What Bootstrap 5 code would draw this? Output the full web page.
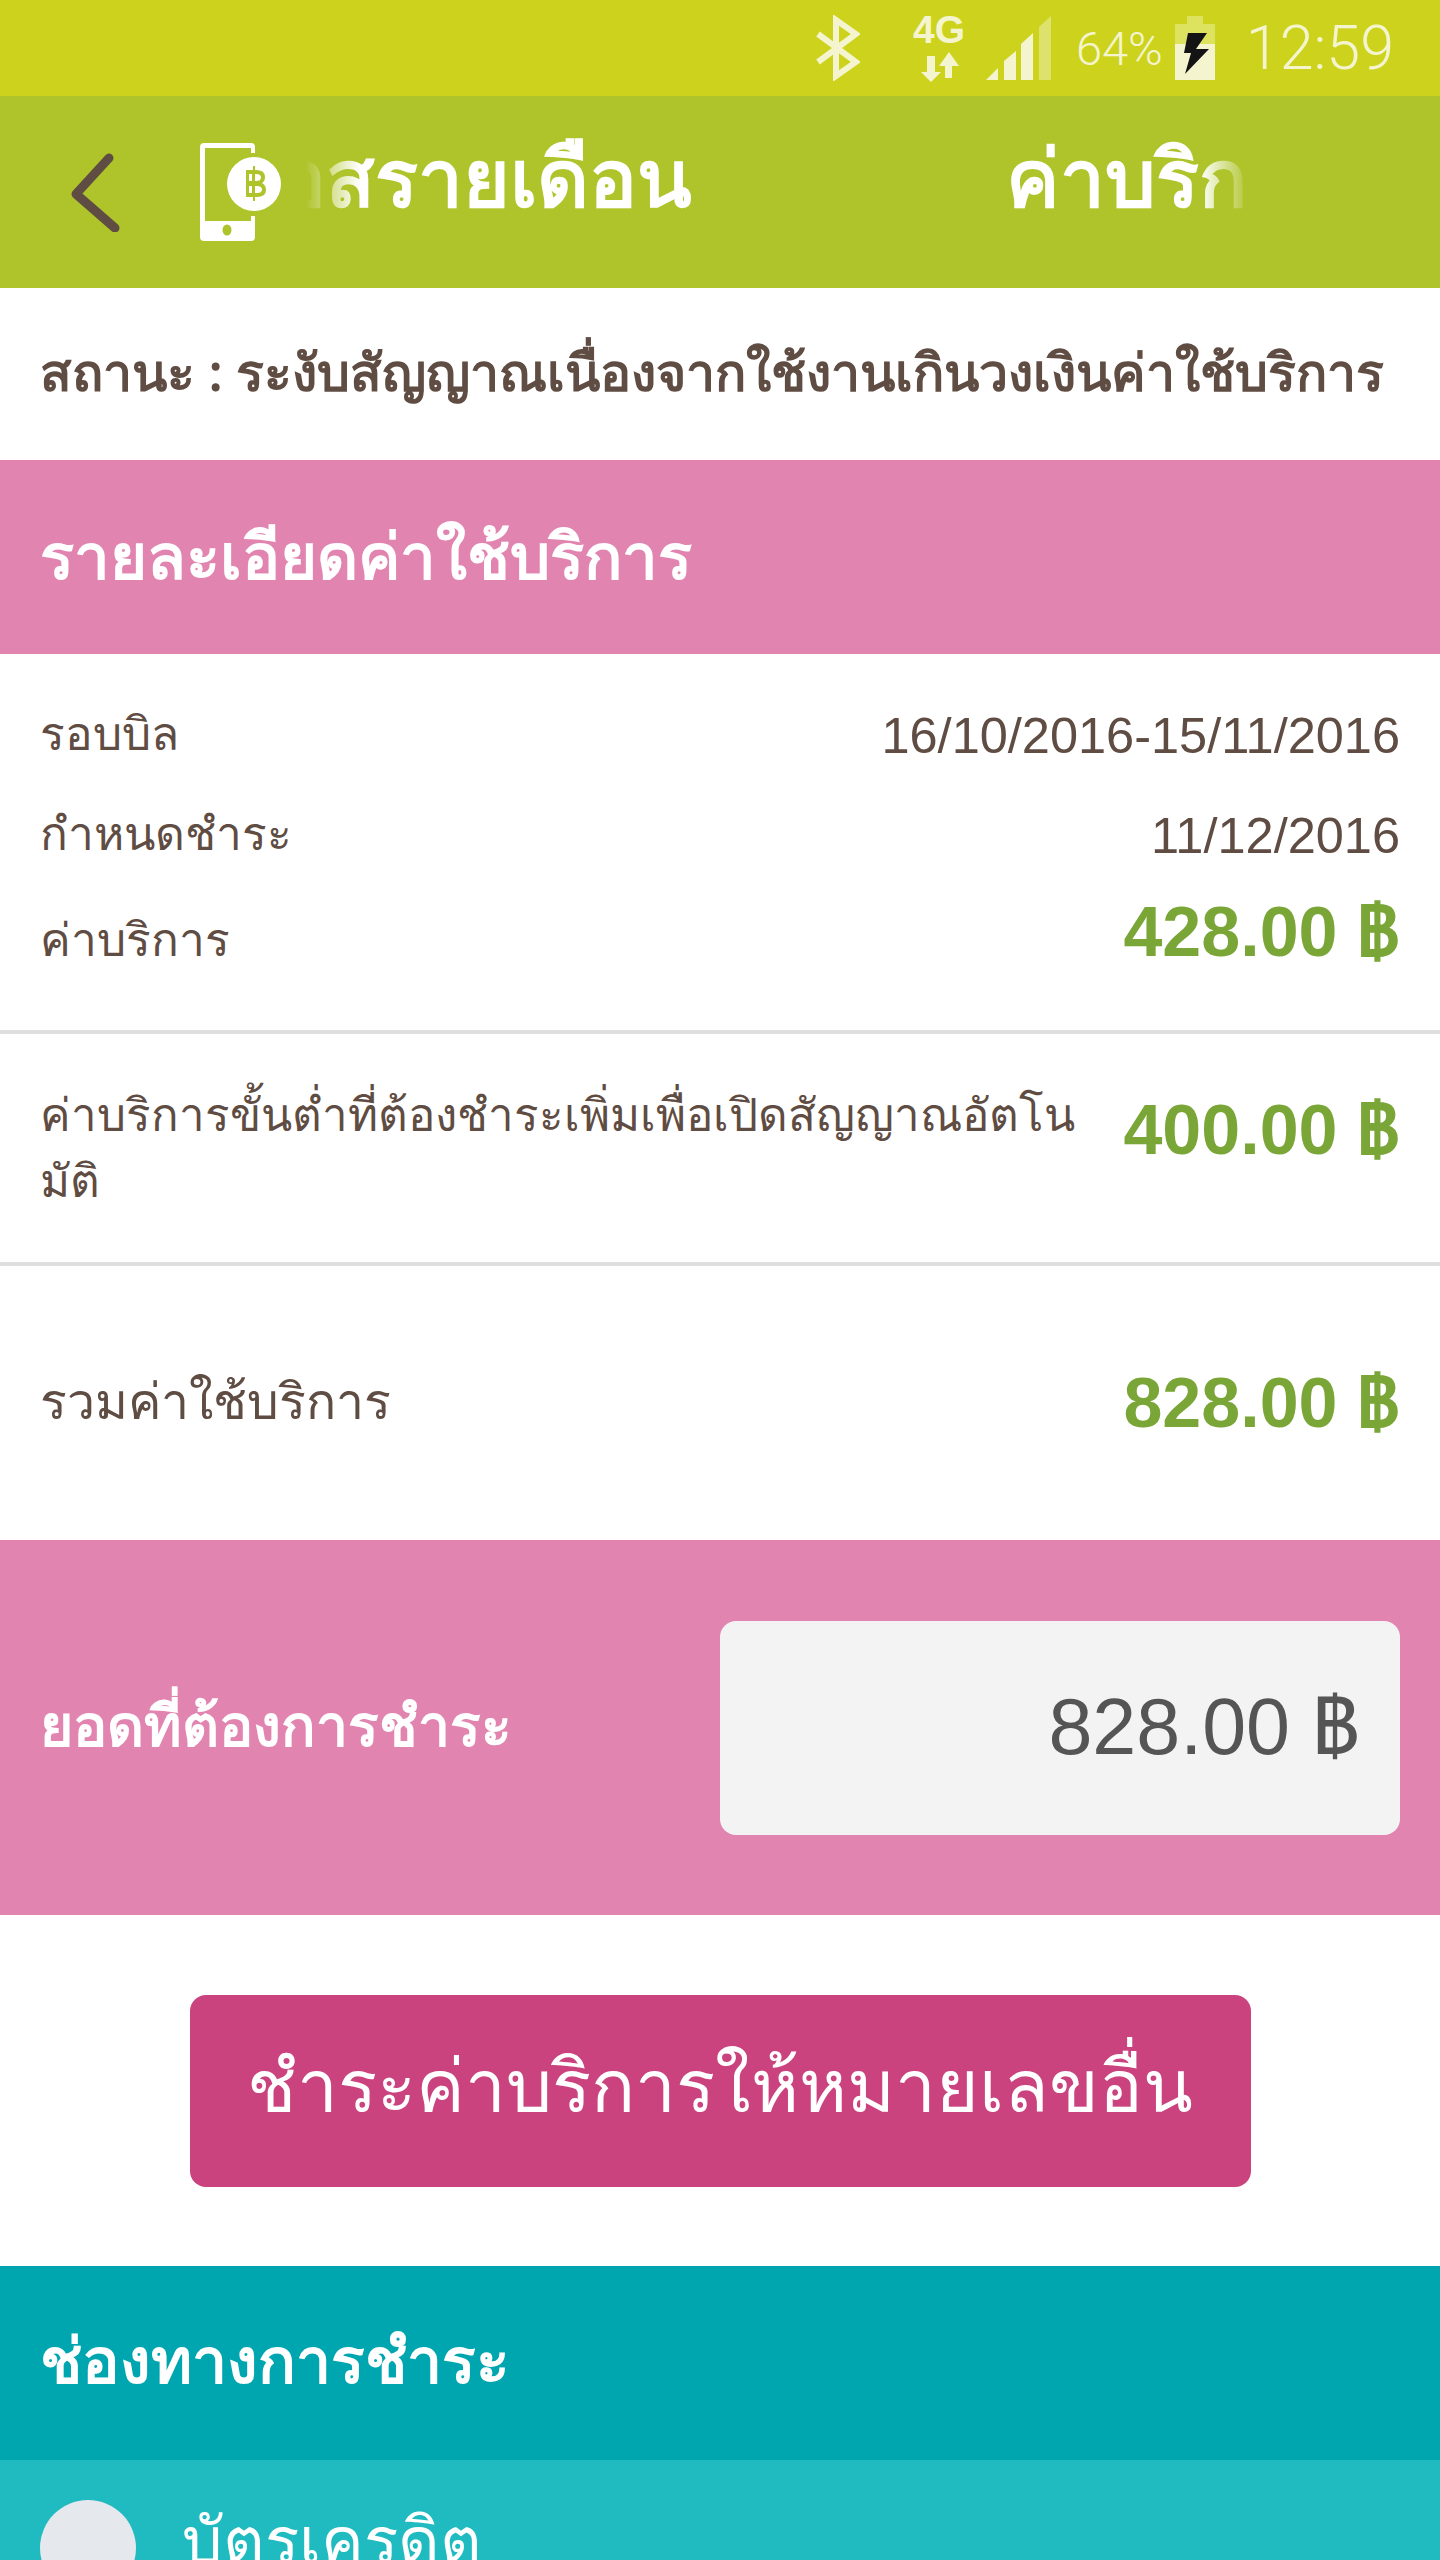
<!DOCTYPE html>
<html lang="th">
<head>
    <meta charset="UTF-8">
    <meta name="viewport" content="width=device-width, initial-scale=1.0">
    <title>ค่าบริการรายเดือน</title>
    <link href="https://cdn.jsdelivr.net/npm/bootstrap@5.3.3/dist/css/bootstrap.min.css" rel="stylesheet">
    <style>
        html, body { height: 2560px; overflow: hidden; }
        body { font-family: "Noto Sans", "Open Sans", "DejaVu Sans", sans-serif; color: #5f4c42; background: #fff; }
        .status-bar { height: 96px; background: #cdd31d; color: #f4f5cf; padding-right: 46px; }
        .status-bar svg { flex: none; }
        .status-time { font-family: Roboto, sans-serif; font-weight: 300; font-size: 61px; line-height: 1; margin-left: 31px; }
        .status-pct { font-family: Roboto, sans-serif; font-weight: 300; font-size: 47px; line-height: 1; margin: 0 12px 0 25px; }
        .icon-4g { margin: 0 23px 0 53px; }
        .app-bar { height: 192px; background: #aec42a; }
        .back-slot { width: 200px; padding-left: 70px; flex: none; }
        .title-view { width: 945px; margin-left: 21px; overflow: hidden; padding-bottom: 32px; -webkit-mask-image: linear-gradient(to right, transparent 0, #000 55px, #000 895px, transparent 945px); mask-image: linear-gradient(to right, transparent 0, #000 55px, #000 895px, transparent 945px); }
        .title-one { width: 387px; flex: none; overflow: hidden; direction: rtl; }
        .title-two { margin-left: 314px; flex: none; }
        .marquee-text { color: #fff; font-size: 80px; font-weight: 600; line-height: 1.3; white-space: nowrap; }
        .status-row { height: 172px; padding: 0 40px 4px; font-size: 51.800px; font-weight: 600; white-space: nowrap; }
        .band { height: 194px; padding: 0 40px 4px; color: #fff; font-weight: 600; }
        .band-pink { background: #e184af; font-size: 63.500px; }
        .band-teal { background: #00a6af; font-size: 62.500px; padding-bottom: 8px; }
        .detail-box { height: 376px; padding: 32px 40px 0; }
        .detail-line { font-size: 46px; line-height: 1.2; }
        .line-a { height: 100px; }
        .line-c { margin-top: 11px; }
        .label-up { padding-bottom: 6px; }
        .label-low { padding-top: 14px; }
        .money { color: #79a637; font-size: 70px; font-weight: 600; font-family: "Liberation Sans", sans-serif; line-height: 1; white-space: nowrap; }
        .date-text { font-family: "Liberation Sans", sans-serif; font-size: 50.500px; }
        .rule-line { height: 4px; background: #dedede; }
        .min-row { height: 228px; padding: 46px 40px 0; }
        .min-label { font-size: 45.700px; line-height: 66px; white-space: nowrap; }
        .min-money { margin-top: 15px; }
        .total-row { height: 274px; padding: 0 40px; font-size: 50px; }
        .total-row span:first-child { padding-bottom: 6px; }
        .pay-band { height: 375px; padding: 0 40px; background: #e184af; color: #fff; font-size: 57px; font-weight: 600; }
        .pay-band span { padding-bottom: 6px; }
        .pay-box { width: 680px; height: 214px; background: #f3f3f3; border-radius: 16px; color: #555; font-family: "Liberation Sans", sans-serif; font-weight: 400; font-size: 79px; padding-right: 40px; }
        .pay-wrap { height: 351px; }
        .other-btn { width: 1061px; height: 192px; background: #ca437f; border: 0; border-radius: 16px; color: #fff; font-size: 73px; line-height: 1; padding-bottom: 20px; }
        .other-btn:hover { background: #ca437f; color: #fff; }
        .option-row { height: 100px; background: #1fbbc1; color: #fff; padding-left: 40px; overflow: hidden; align-items: flex-start; }
        .radio-dot { width: 96px; height: 96px; background: #e5e9ee; border-radius: 50%; margin-top: 40px; flex: none; }
        .option-text { font-size: 64px; line-height: 1; margin: 47px 0 0 46px; }
    </style>
</head>
<body>
    <div class="status-bar d-flex align-items-center justify-content-end">
        <svg width="44" height="66" viewBox="0 0 44 66" fill="none" stroke="#f4f5cf" stroke-width="6"><path d="M2 19L40 47 20 61V5l20 14L2 47"/></svg>
        <svg width="50" height="68" viewBox="0 0 50 68" class="icon-4g" fill="#f4f5cf"><text x="0" y="29" font-family="Liberation Sans" font-weight="700" font-size="39">4G</text><path d="M14 42h8v16h6L18 68 8 58h6zM36 38l10 14h-7v12h-7V52h-6z"/></svg>
        <svg width="65" height="64" viewBox="0 0 65 64" fill="#f4f5cf"><path d="M0 64l12-12v12zM18 64V45l12-10v29zM35 64V28l12-11v47z"/><path d="M53 64V11L65 0v64z" opacity=".45"/></svg>
        <span class="status-pct">64%</span>
        <svg width="40" height="64" viewBox="0 0 40 64"><path d="M12 0h16v8h12v20H0V8h12z" fill="#dde25f"/><path d="M0 28h40v36H0z" fill="#f4f5cf"/><path d="M13 17h19l-11 16h13L10 58l6-21H9z" fill="#141414"/></svg>
        <span class="status-time">12:59</span>
    </div>

    <div class="app-bar d-flex align-items-center">
        <div class="back-slot">
            <svg width="52" height="80" viewBox="0 0 52 80" fill="none" stroke="#5f4c42" stroke-width="9" stroke-linecap="round" stroke-linejoin="round"><path d="M39 6L6 42l39 34"/></svg>
        </div>
        <svg width="84" height="98" viewBox="0 0 84 98" class="flex-shrink-0">
            <path fill="#fff" d="M4 0h47q4 0 4 4v6h-4V5H5v73h46v-5h4v21q0 4-4 4H4q-4 0-4-4V4q0-4 4-4z"/>
            <ellipse cx="27" cy="87" rx="4.500" ry="5.500" fill="#aec42a"/>
            <circle cx="54" cy="41" r="27" fill="#fff"/>
            <path d="M53 23h2v4h1q9 0 9 7 0 4-3 6 4 2 4 7 0 7-9 7h-2v4h-2v-4h-7V27h7z" fill="#aec42a"/>
            <path d="M49 31h3v7h-3zM49 43h3v7h-3zM55 31h1q5 0 5 3.500T56 38h-1zM55 43h2q5 0 5 3.500T57 50h-2z" fill="#fff"/>
        </svg>
        <div class="title-view d-flex">
            <div class="title-one marquee-text"><bdi>อสรายเดือน</bdi></div>
            <div class="title-two marquee-text">ค่าบริการ</div>
        </div>
    </div>

    <div class="status-row d-flex align-items-center">สถานะ : ระงับสัญญาณเนื่องจากใช้งานเกินวงเงินค่าใช้บริการ</div>

    <div class="band band-pink d-flex align-items-center">รายละเอียดค่าใช้บริการ</div>

    <div class="detail-box">
        <div class="line-a d-flex justify-content-between align-items-center detail-line"><span class="label-up">รอบบิล</span><span class="date-text">16/10/2016-15/11/2016</span></div>
        <div class="line-a d-flex justify-content-between align-items-center detail-line"><span class="label-up">กำหนดชำระ</span><span class="date-text">11/12/2016</span></div>
        <div class="line-c d-flex justify-content-between align-items-center detail-line"><span class="label-low">ค่าบริการ</span><span class="money">428.00 ฿</span></div>
    </div>
    <div class="rule-line"></div>
    <div class="min-row d-flex justify-content-between align-items-start">
        <div class="min-label">ค่าบริการขั้นต่ำที่ต้องชำระเพิ่มเพื่อเปิดสัญญาณอัตโน<br>มัติ</div>
        <span class="money min-money">400.00 ฿</span>
    </div>
    <div class="rule-line"></div>
    <div class="total-row d-flex justify-content-between align-items-center"><span>รวมค่าใช้บริการ</span><span class="money">828.00 ฿</span></div>

    <div class="pay-band d-flex justify-content-between align-items-center">
        <span>ยอดที่ต้องการชำระ</span>
        <div class="pay-box d-flex align-items-center justify-content-end">828.00 ฿</div>
    </div>

    <div class="pay-wrap d-flex align-items-center justify-content-center">
        <button type="button" class="btn other-btn">ชำระค่าบริการให้หมายเลขอื่น</button>
    </div>

    <div class="band band-teal d-flex align-items-center">ช่องทางการชำระ</div>
    <div class="option-row d-flex">
        <div class="radio-dot"></div>
        <div class="option-text">บัตรเครดิต</div>
    </div>

    <script src="https://cdn.jsdelivr.net/npm/bootstrap@5.3.3/dist/js/bootstrap.bundle.min.js"></script>
</body>
</html>
